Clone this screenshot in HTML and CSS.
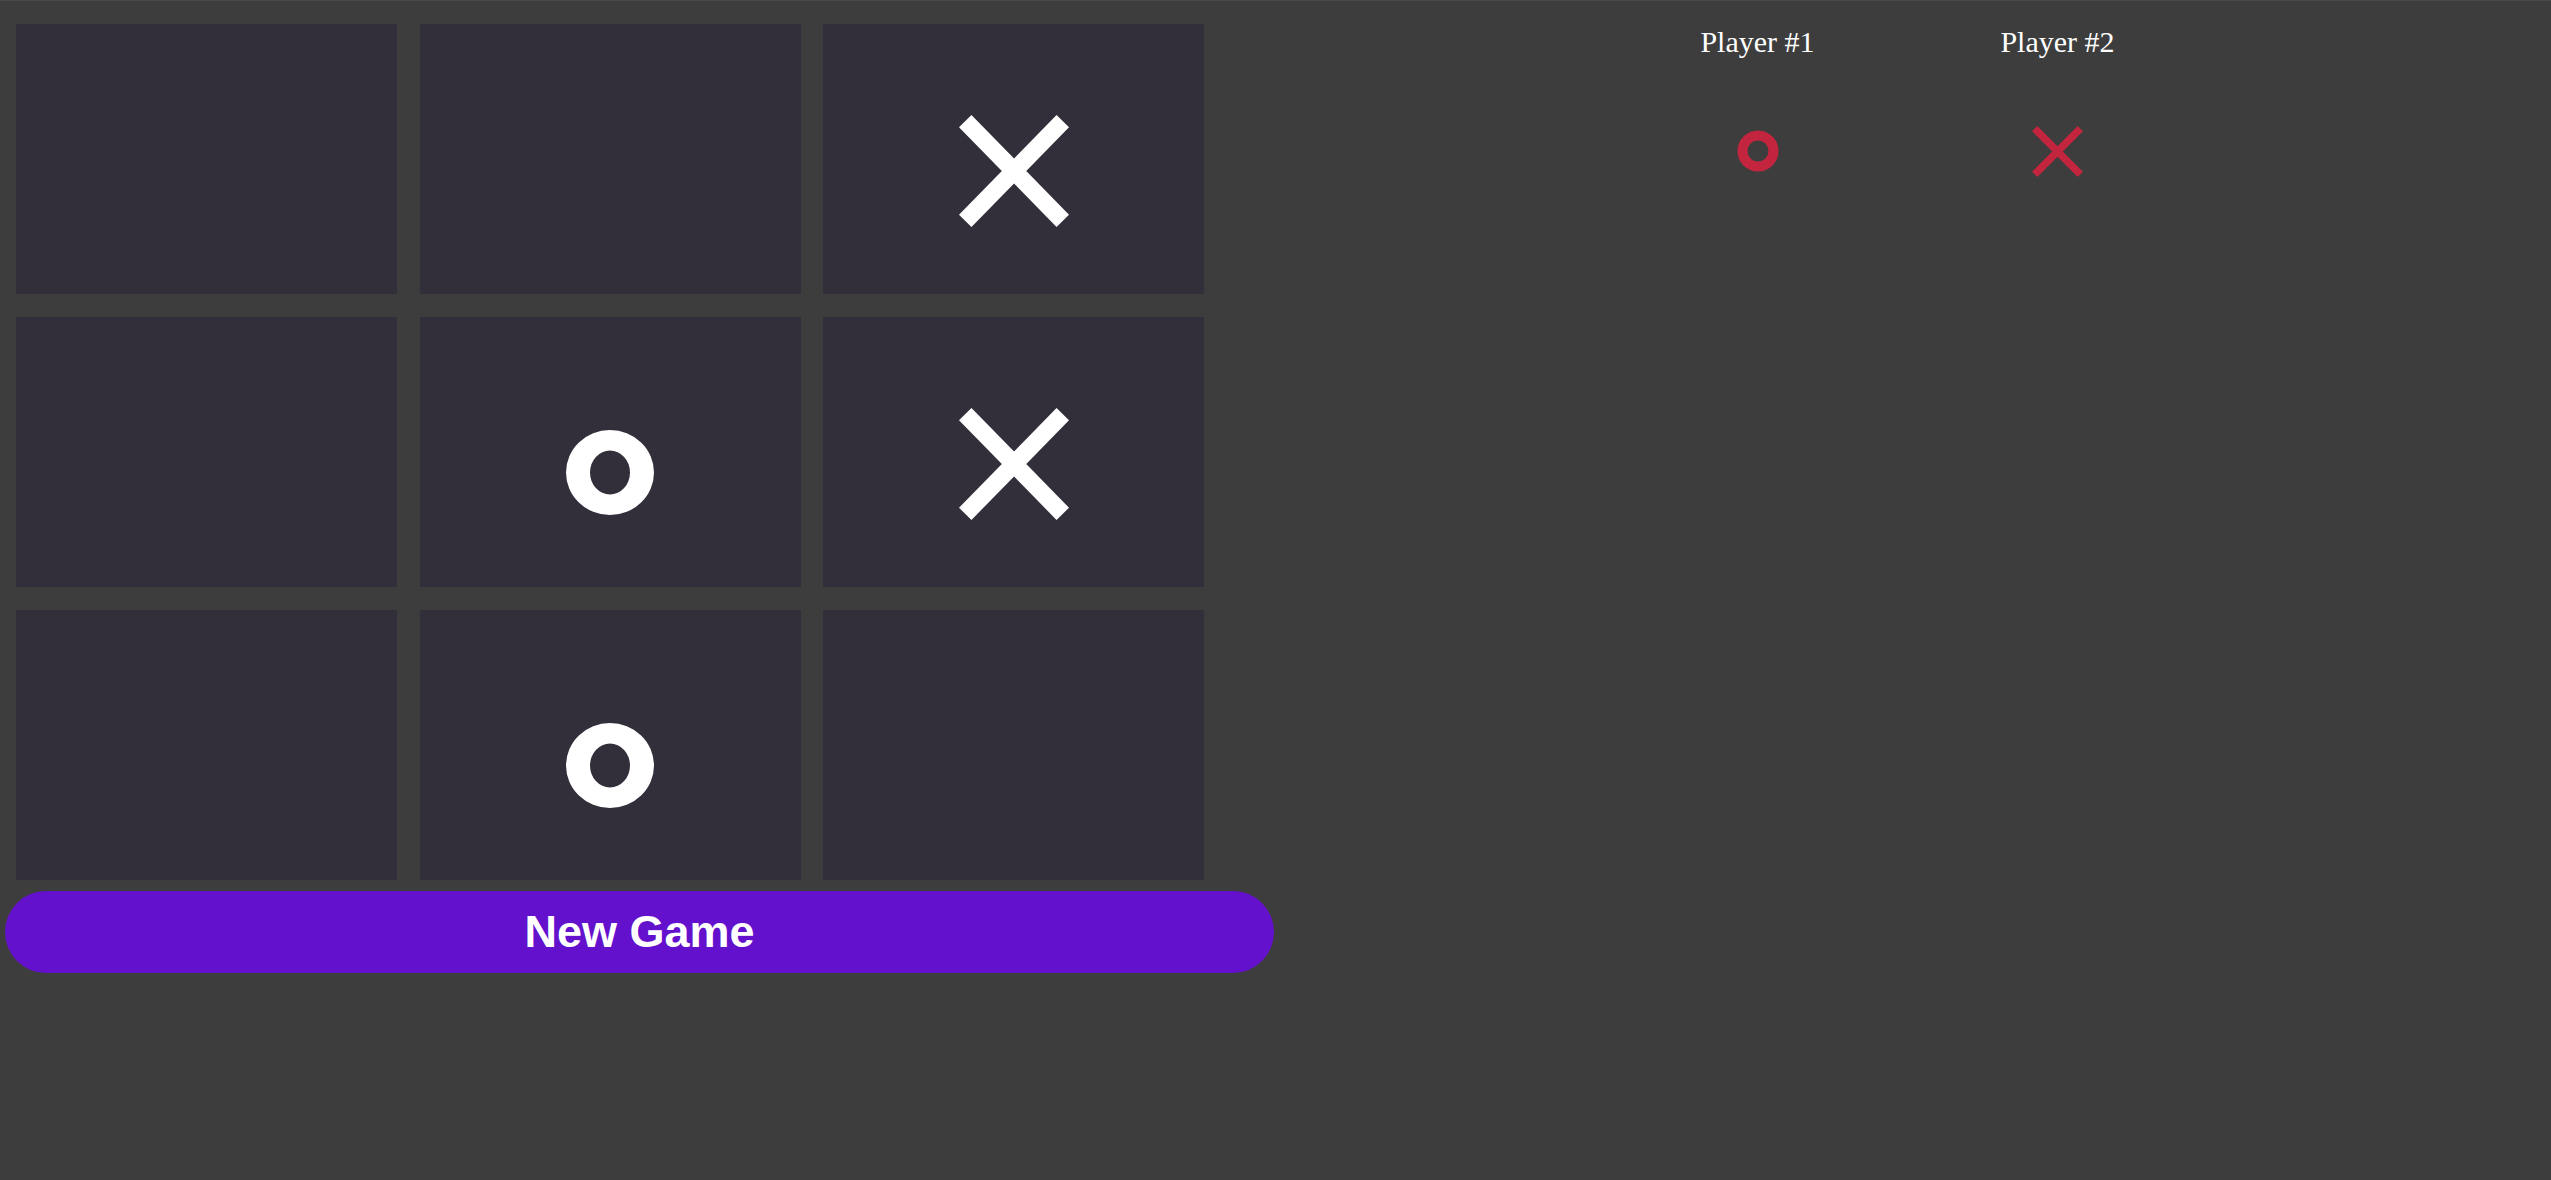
FILE: index.html
```html
<!DOCTYPE html>
<html lang="en">
<head>
<meta charset="utf-8">
<title>Tic Tac Toe</title>
<link rel="stylesheet" href="styles.css">
</head>
<body>
<div class="app">
  <section class="game">
    <div class="board">
      <div class="cell"></div>
      <div class="cell"></div>
      <div class="cell"><svg class="mark-x" viewBox="0 0 110 112" width="110" height="112"><path d="M6.2 6.2 L103.8 105.8 M103.8 6.2 L6.2 105.8" stroke="#ffffff" stroke-width="17.5" fill="none"/></svg></div>
      <div class="cell"></div>
      <div class="cell"><svg class="mark-o" viewBox="0 0 88 85" width="88" height="85"><path fill-rule="evenodd" fill="#ffffff" d="M0 42.5 A44 42.5 0 1 0 88 42.5 A44 42.5 0 1 0 0 42.5 Z M24 42.5 A20 22 0 1 0 64 42.5 A20 22 0 1 0 24 42.5 Z"/></svg></div>
      <div class="cell"><svg class="mark-x" viewBox="0 0 110 112" width="110" height="112"><path d="M6.2 6.2 L103.8 105.8 M103.8 6.2 L6.2 105.8" stroke="#ffffff" stroke-width="17.5" fill="none"/></svg></div>
      <div class="cell"></div>
      <div class="cell"><svg class="mark-o" viewBox="0 0 88 85" width="88" height="85"><path fill-rule="evenodd" fill="#ffffff" d="M0 42.5 A44 42.5 0 1 0 88 42.5 A44 42.5 0 1 0 0 42.5 Z M24 42.5 A20 22 0 1 0 64 42.5 A20 22 0 1 0 24 42.5 Z"/></svg></div>
      <div class="cell"></div>
    </div>
    <button class="new-game">New Game</button>
  </section>
  <section class="players">
    <div class="player">
      <div class="player-name">Player #1</div>
      <div class="player-mark"><svg viewBox="0 0 42 42" width="42" height="42"><circle cx="21" cy="21" r="15.5" stroke="#c3253f" stroke-width="10" fill="none"/></svg></div>
    </div>
    <div class="player">
      <div class="player-name">Player #2</div>
      <div class="player-mark"><svg viewBox="0 0 51 51" width="51" height="51"><path d="M2.7 2.7 L48.3 48.3 M48.3 2.7 L2.7 48.3" stroke="#c3253f" stroke-width="7.5" fill="none"/></svg></div>
    </div>
  </section>
</div>
</body>
</html>
```
FILE: styles.css
```css
html, body {
  margin: 0;
  padding: 0;
  background: #3d3d3d;
}
body {
  border-top: 1px solid #4a4a4a;
  min-height: 1179px;
  box-sizing: border-box;
}
.app {
  display: flex;
  padding: 0 10px 0 5px;
}
.game {
  width: 1269px;
  display: flex;
  flex-direction: column;
}
.board {
  display: grid;
  grid-template-columns: repeat(3, 381px);
  grid-template-rows: repeat(3, 270px);
  column-gap: 22.5px;
  row-gap: 23px;
  margin: 23px 0 0 11px;
}
.cell {
  background: #322f3b;
  display: flex;
  align-items: center;
  justify-content: center;
}
.mark-x {
  display: block;
  margin-top: 24px;
}
.mark-o {
  display: block;
  margin-top: 40px;
}
.new-game {
  margin-top: 11px;
  height: 82px;
  border: none;
  border-radius: 41px;
  background: #6311cd;
  color: #ffffff;
  font-family: "Liberation Sans", Arial, sans-serif;
  font-weight: bold;
  font-size: 45px;
  padding: 0;
  cursor: pointer;
}
.players {
  flex: 1;
  display: flex;
  justify-content: center;
  padding-top: 24px;
}
.player {
  width: 300px;
  display: flex;
  flex-direction: column;
  align-items: center;
}
.player-name {
  font-family: "Liberation Serif", "Times New Roman", serif;
  font-size: 30px;
  line-height: 33px;
  color: #ffffff;
}
.player-mark {
  height: 52px;
  margin-top: 67px;
  display: flex;
  align-items: center;
  justify-content: center;
}
.player-mark svg {
  display: block;
}
```
